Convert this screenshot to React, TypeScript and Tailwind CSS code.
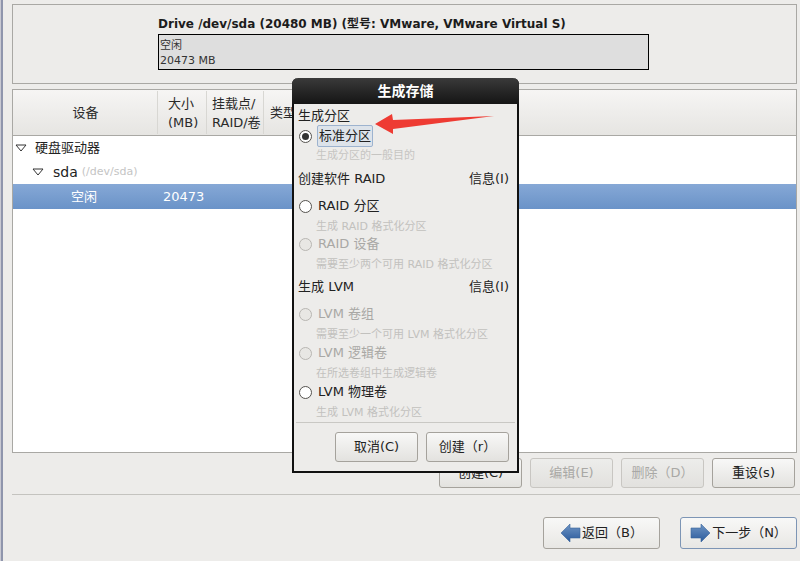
const font = "font-['DejaVu_Sans','Noto_Sans_CJK_SC',sans-serif]";

function Btn({ label, w, disabled }: { label: string; w: string; disabled?: boolean }) {
  return (
    <div
      className={`${w} h-[30px] rounded-[3px] border flex items-center justify-center text-[13px] bg-gradient-to-b ${
        disabled
          ? 'border-[#c8c6c2] from-[#ededeb] to-[#e2e1de] text-[#a9a8a5]'
          : 'border-[#a5a29c] from-[#f8f8f7] to-[#e3e2df] text-[#222]'
      }`}
    >
      {label}
    </div>
  );
}

function Radio({ checked, disabled }: { checked?: boolean; disabled?: boolean }) {
  return (
    <span
      className={`w-[13px] h-[13px] rounded-full border flex items-center justify-center shrink-0 ${
        disabled ? 'border-[#b8b6b2] bg-[#e8e7e4]' : 'border-[#55534f] bg-white'
      }`}
    >
      {checked && <span className="w-[7px] h-[7px] rounded-full bg-[#333]" />}
    </span>
  );
}

function Option({ label, desc, disabled, h }: { label: string; desc: string; disabled?: boolean; h: string }) {
  return (
    <div className={`${h} shrink-0 flex flex-col`}>
      <div className={`h-[20px] shrink-0 flex items-center gap-[6px] pl-[5px] text-[13px] ${disabled ? 'text-[#a9a8a5]' : 'text-[#222]'}`}>
        <Radio disabled={disabled} />
        <span>{label}</span>
      </div>
      <div className="h-[18px] shrink-0 mt-[2px] pl-[22px] flex items-center text-[11px] text-[#c2c1be] whitespace-nowrap">{desc}</div>
    </div>
  );
}

function Section({ label, info, h }: { label: string; info?: boolean; h: string }) {
  return (
    <div className={`${h} shrink-0 flex items-center justify-between pl-[4px] pr-[8px] text-[13px] text-[#222]`}>
      <span>{label}</span>
      {info && <span>信息(I)</span>}
    </div>
  );
}

function Arrow({ dir }: { dir: 'l' | 'r' }) {
  return (
    <svg width="21" height="20" viewBox="0 0 21 20" className={dir === 'r' ? 'rotate-180' : ''}>
      <defs>
        <linearGradient id={`ag${dir}`} x1="0" y1={dir === 'r' ? '1' : '0'} x2="0" y2={dir === 'r' ? '0' : '1'}>
          <stop offset="0" stopColor="#6f95c4" />
          <stop offset="1" stopColor="#2a5a9c" />
        </linearGradient>
      </defs>
      <path d="M1 10 L10 1 V5 H20 V15 H10 V19 Z" fill={`url(#ag${dir})`} stroke="#3a659c" strokeWidth="0.6" />
    </svg>
  );
}

function Tri({ className }: { className: string }) {
  return (
    <svg width="12" height="8" viewBox="0 0 12 8" className={className}>
      <path d="M1 1 H11 L6 7 Z" fill="white" stroke="#333" strokeWidth="1" />
    </svg>
  );
}

export default function App() {
  return (
    <div className={`${font} relative w-[800px] h-[561px] overflow-hidden bg-[#edecea] flex text-[#222]`}>
      <div className="w-[4px] shrink-0 flex">
        <div className="w-[1px] bg-[#c9c9d2]" />
        <div className="w-[2px] bg-[#8f95ac]" />
      </div>
      <div className="flex-1 flex flex-col pl-[8px] pt-[4px]">
        {/* drive panel */}
        <div className="w-[785px] h-[80px] border border-[#a9a8a4] pl-[145px] pt-[11px] flex flex-col">
          <div className="text-[12px] font-bold leading-[17px] h-[18px] text-[#1c1c1c] whitespace-nowrap">
            Drive /dev/sda (20480 MB) (型号: VMware, VMware Virtual S)
          </div>
          <div className="w-[491px] h-[36px] border border-black bg-[#dedede] pl-[1px] text-[11px] leading-[15px] pt-[3px] text-[#333]">
            <div>空闲</div>
            <div>20473 MB</div>
          </div>
        </div>
        {/* table */}
        <div className="mt-[5px] w-[785px] h-[364px] border border-[#a9a8a4] bg-white flex flex-col">
          <div className="h-[46px] shrink-0 flex bg-gradient-to-b from-[#f6f5f4] to-[#e6e5e2] border-b border-[#a9a8a4] text-[13px] text-[#2a2a2a]">
            <div className="w-[144px] pl-[1px] flex items-center justify-center">设备</div>
            <div className="w-[49px] border-l border-[#d8d7d3] my-[1px] pl-[10px] flex flex-col justify-center leading-[19px]">
              <span>大小</span>
              <span>(MB)</span>
            </div>
            <div className="w-[57px] border-l border-[#d8d7d3] my-[1px] pl-[5px] flex flex-col justify-center leading-[19px]">
              <span>挂载点/</span>
              <span>RAID/卷</span>
            </div>
            <div className="border-l border-[#d8d7d3] my-[1px] pl-[6px] flex items-center">类型</div>
          </div>
          <div className="h-[24px] flex items-center pl-[2px] text-[13px]">
            <Tri className="mr-[8px]" />
            <span>硬盘驱动器</span>
          </div>
          <div className="h-[24px] flex items-center pl-[19px] text-[13px]">
            <Tri className="mr-[9px]" />
            <span className="text-[14px]">sda</span>
            <span className="ml-[4px] text-[11px] text-[#c4c4c4]">(/dev/sda)</span>
          </div>
          <div className="h-[25px] flex items-center text-white text-[13px] bg-gradient-to-b from-[#86a8d6] to-[#6a93c8]">
            <span className="w-[150px] pl-[58px]">空闲</span>
            <span className="text-[13px]">20473</span>
          </div>
        </div>
        {/* action buttons */}
        <div className="mt-[5px] w-[783px] flex justify-end gap-[8px]">
          <Btn label="创建(C)" w="w-[83px]" />
          <Btn label="编辑(E)" w="w-[83px]" disabled />
          <Btn label="删除（D）" w="w-[83px]" disabled />
          <Btn label="重设(s)" w="w-[83px]" />
        </div>
        <div className="mt-[6px] h-[1px] w-[788px] bg-[#c4c3bf]" />
        {/* nav */}
        <div className="mt-[22px] w-[785px] flex justify-end gap-[20px]">
          <div className="w-[117px] h-[32px] rounded-[3px] border border-[#a5a29c] bg-gradient-to-b from-[#f8f8f7] to-[#e8e7e4] flex items-center justify-center gap-[1px] text-[13px]">
            <Arrow dir="l" />
            <span>返回（B）</span>
          </div>
          <div className="w-[117px] h-[32px] rounded-[3px] border border-[#7d95b5] bg-gradient-to-b from-[#f8f8f7] to-[#e8e7e4] flex items-center justify-center gap-[1px] text-[13px]">
            <Arrow dir="r" />
            <span>下一步（N）</span>
          </div>
        </div>
      </div>

      {/* dialog */}
      <div className="absolute left-[292px] top-[78px] w-[227px] h-[395px] bg-[#edecea] border-2 border-[#111] border-t-0 rounded-t-[6px] flex flex-col">
        <div className="-mx-[2px] h-[26px] shrink-0 rounded-t-[6px] bg-gradient-to-b from-[#3a3a3a] to-[#151515] text-white font-bold text-[14px] flex items-center justify-center">
          生成存储
        </div>
        <Section label="生成分区" h="h-[21px] mt-[1px]" />
        <div className="h-[20px] shrink-0 flex items-center gap-[6px] pl-[5px] text-[13px]">
          <Radio checked />
          <span className="border border-[#9db3cf] bg-[#dde3ea] rounded-[2px] px-[1px] -ml-[1px] h-[22px] leading-[20px]">标准分区</span>
        </div>
        <div className="h-[20px] shrink-0 pl-[22px] flex items-center text-[11px] text-[#c6c5c2]">生成分区的一般目的</div>
        <Section label="创建软件 RAID" info h="h-[26px]" />
        <div className="h-[4px] shrink-0" />
        <Option label="RAID 分区" desc="生成 RAID 格式化分区" h="h-[38px]" />
        <Option label="RAID 设备" desc="需要至少两个可用 RAID 格式化分区" disabled h="h-[38px]" />
        <Section label="生成 LVM" info h="h-[30px]" />
        <div className="h-[2px] shrink-0" />
        <Option label="LVM 卷组" desc="需要至少一个可用 LVM 格式化分区" disabled h="h-[39px]" />
        <Option label="LVM 逻辑卷" desc="在所选卷组中生成逻辑卷" disabled h="h-[39px]" />
        <Option label="LVM 物理卷" desc="生成 LVM 格式化分区" h="h-[38px]" />
        <div className="mx-[2px] mt-[2px] h-[1px] shrink-0 bg-[#c9c8c4]" />
        <div className="mt-[9px] pr-[8px] flex justify-end gap-[8px]">
          <Btn label="取消(C)" w="w-[83px]" />
          <Btn label="创建（r）" w="w-[83px]" />
        </div>
      </div>

      {/* red annotation arrow */}
      <svg className="absolute left-[372px] top-[112px]" width="125" height="24" viewBox="0 0 125 24">
        <path d="M3 12 L20 2 L21 8 L122 4 L21 17 L21 22 Z" fill="#ee3b33" />
      </svg>
    </div>
  );
}
